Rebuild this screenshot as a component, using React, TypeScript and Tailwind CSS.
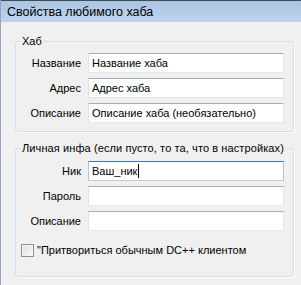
type RowProps = { label: string; value?: string; focused?: boolean; caret?: boolean };

const Row = ({ label, value = "", focused, caret }: RowProps) => {
  return (
    <div className="flex items-center h-[20px]">
      <div className="w-[65px] text-right">{label}</div>
      <div
        className={
          focused
            ? "ml-[7px] w-[196px] h-[20px] bg-white border border-[#a4c9e3] border-t-[#3d7bad] border-b-[#b5cfe7] flex items-center pl-[3px]"
            : "ml-[7px] w-[196px] h-[20px] bg-white border border-[#e2e3ea] border-t-[#abadb3] border-b-[#e3e9ef] flex items-center pl-[3px]"
        }
      >
        <span className="whitespace-nowrap">{value}</span>
        {caret && <span className="inline-block w-[1px] h-[14px] bg-black ml-[1px]" />}
      </div>
    </div>
  );
};

const App = () => {
  return (
    <div
      className="w-[301px] h-[285px] bg-[#f0f0f0] border-l border-[#8ea6c4] text-[11px] text-black overflow-hidden"
      style={{ fontFamily: '"Liberation Sans", Arial, sans-serif' }}
    >
      {/* title bar */}
      <div className="h-[22px] border-t border-[#4a4a4a] bg-gradient-to-b from-[#a9c5e5] to-[#bdd4ec] flex items-center pl-[6px] pt-[1px]">
        <span className="text-[12.5px] leading-[15px]">Свойства любимого хаба</span>
      </div>

      <div className="pl-[14px] pt-[12px]">
        <fieldset className="w-[279px] border border-[#d5dfe5] rounded-[3px] shadow-[1px_1px_0_#ffffff] pt-[5px] pb-[8px]">
          <legend className="ml-[5px] px-[1px] leading-[14px]">Хаб</legend>
          <div className="flex flex-col gap-[5px]">
            <Row label="Название" value="Название хаба" />
            <Row label="Адрес" value="Адрес хаба" />
            <Row label="Описание" value="Описание хаба (необязательно)" />
          </div>
        </fieldset>

        <fieldset className="mt-[9px] w-[279px] border border-[#d5dfe5] rounded-[3px] shadow-[1px_1px_0_#ffffff] pt-[6px] pb-[18px]">
          <legend className="ml-[5px] px-[1px] leading-[14px] whitespace-nowrap tracking-[0.1px]">
            Личная инфа (если пусто, то та, что в настройках)
          </legend>
          <div className="flex flex-col gap-[5px]">
            <Row label="Ник" value="Ваш_ник" focused caret />
            <Row label="Пароль" />
            <Row label="Описание" />
          </div>
          <div className="mt-[12px] h-[15px] flex items-center pl-[5px]">
            <span className="w-[13px] h-[13px] border border-[#8f8f8f] bg-gradient-to-br from-[#dcdcdc] to-[#fafafa] shadow-[inset_0_0_0_1px_#f4f4f4]" />
            <span className="ml-[3px] whitespace-nowrap">"Притвориться обычным DC++ клиентом</span>
          </div>
        </fieldset>
      </div>
    </div>
  );
};

export default App;
